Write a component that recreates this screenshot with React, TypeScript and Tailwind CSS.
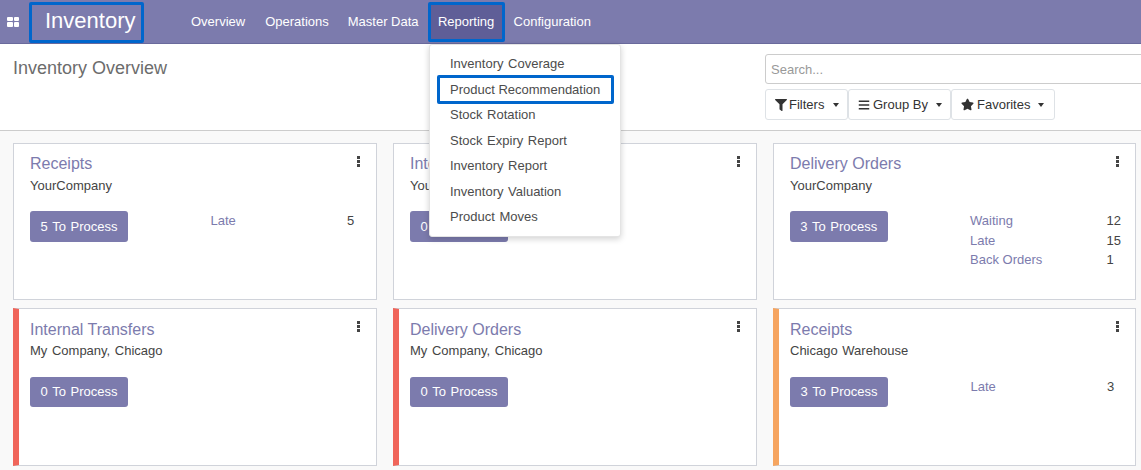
import { FaFilter, FaBars, FaStar } from "react-icons/fa";

type Stat = { label: string; value: number };
type Card = {
  title: string;
  company: string;
  button: string;
  accent?: string;
  stats: Stat[];
};

const cards: Card[] = [
  { title: "Receipts", company: "YourCompany", button: "5 To Process", stats: [{ label: "Late", value: 5 }] },
  { title: "Internal Transfers", company: "YourCompany", button: "0 To Process", stats: [] },
  {
    title: "Delivery Orders",
    company: "YourCompany",
    button: "3 To Process",
    stats: [
      { label: "Waiting", value: 12 },
      { label: "Late", value: 15 },
      { label: "Back Orders", value: 1 },
    ],
  },
  { title: "Internal Transfers", company: "My Company, Chicago", button: "0 To Process", accent: "border-l-[#f0655a]", stats: [] },
  { title: "Delivery Orders", company: "My Company, Chicago", button: "0 To Process", accent: "border-l-[#f0655a]", stats: [] },
  {
    title: "Receipts",
    company: "Chicago Warehouse",
    button: "3 To Process",
    accent: "border-l-[#f6a560]",
    stats: [{ label: "Late", value: 3 }],
  },
];

const reports = [
  "Inventory Coverage",
  "Product Recommendation",
  "Stock Rotation",
  "Stock Expiry Report",
  "Inventory Report",
  "Inventory Valuation",
  "Product Moves",
];

function Caret() {
  return <span className="ml-[8px] h-0 w-0 border-x-[3px] border-t-[4px] border-x-transparent border-t-[#333]" />;
}

function Kebab() {
  return (
    <span className="absolute right-[16px] top-[12px] flex flex-col gap-[1px]">
      <span className="h-[3px] w-[3px] bg-[#444]" />
      <span className="h-[3px] w-[3px] bg-[#444]" />
      <span className="h-[3px] w-[3px] bg-[#444]" />
    </span>
  );
}

function KanbanCard({ card }: { card: Card }) {
  const accented = Boolean(card.accent);
  return (
    <div
      className={`relative border border-[#d0d3da] bg-white pr-[14px] ${
        accented ? `h-[158px] border-l-[6px] pl-[11px] pt-[9px] ${card.accent}` : "h-[157px] pl-[16px] pt-[8px]"
      }`}
    >
      <Kebab />
      <div className="text-[16px] leading-[23px] text-[#7c7bad]">{card.title}</div>
      <div className={`text-[13px] leading-[18px] text-[#444] [word-spacing:1px] ${accented ? "mt-[1px]" : "mt-[2px]"}`}>
        {card.company}
      </div>
      <div className={`flex ${accented ? "mt-[17px]" : "mt-[16px]"}`}>
        <div
          className={`flex w-[98px] items-center justify-center rounded-[3px] bg-[#7c7bad] text-[13px] text-white [word-spacing:1px] ${
            accented ? "h-[30px]" : "h-[31px]"
          }`}
        >
          {card.button}
        </div>
        <div className="ml-[82.5px] flex-1 text-[13px] leading-[19.5px]">
          {card.stats.map((s) => (
            <div key={s.label} className="flex">
              <span className="w-[136.5px] text-[#7c7bad]">{s.label}</span>
              <span className="text-[#444]">{s.value}</span>
            </div>
          ))}
        </div>
      </div>
    </div>
  );
}

export default function App() {
  return (
    <div className="relative h-[470px] w-[1141px] overflow-hidden bg-[#f9f9f9] font-['Liberation_Sans',sans-serif] text-[13px] text-[#4c4c4c]">
      <nav className="flex h-[44px] items-center border-b border-[#6a6a9c] bg-[#7c7bad] text-white">
        <div className="ml-[7px] grid w-[12px] grid-cols-2 gap-[1px]">
          <span className="h-[4.5px] rounded-[1px] bg-white" />
          <span className="h-[4.5px] rounded-[1px] bg-white" />
          <span className="h-[4.5px] rounded-[1px] bg-white" />
          <span className="h-[4.5px] rounded-[1px] bg-white" />
        </div>
        <div className="ml-[10px] flex h-[41px] w-[115px] items-center self-end rounded-[2px] border-[3px] border-[#0066cc] pb-[4px] pl-[13px] text-[22px]">
          Inventory
        </div>
        <div className="ml-[47px] flex items-center">
          <span className="mr-[20px]">Overview</span>
          <span className="mr-[19px]">Operations</span>
          <span className="mr-[9px]">Master Data</span>
          <span className="mr-[9px] flex h-[40px] w-[77px] items-center justify-center rounded-[2px] border-[3px] border-[#0066cc] bg-[#5f5e97]">
            Reporting
          </span>
          <span>Configuration</span>
        </div>
      </nav>

      <header className="flex h-[87px] border-b border-[#ccc] bg-white">
        <h1 className="ml-[13px] mt-[13px] w-[752px] shrink-0 text-[18px] leading-[22px] text-[#6c6c6c]">Inventory Overview</h1>
        <div className="w-[400px] shrink-0 pt-[10px]">
          <div className="flex h-[30px] items-center rounded-[3px] border border-[#ccc] pl-[5px] pt-[2px] text-[#999]">Search...</div>
          <div className="mt-[5px] flex text-[#333]">
            <div className="flex h-[31px] w-[83px] items-center rounded-[3px] border border-[#dee2e6] pl-[9px]">
              <FaFilter className="mr-[2px] text-[12px]" />
              <span className="mr-[1px]">Filters</span>
              <Caret />
            </div>
            <div className="flex h-[31px] w-[103px] items-center rounded-[3px] border border-[#dee2e6] pl-[9px]">
              <FaBars className="mr-[3px] text-[12px]" />
              Group By
              <Caret />
            </div>
            <div className="flex h-[31px] w-[104px] items-center rounded-[3px] border border-[#dee2e6] pl-[9px]">
              <FaStar className="mr-[3px] text-[13px]" />
              Favorites
              <Caret />
            </div>
          </div>
        </div>
      </header>

      <main className="grid grid-cols-[364px_364px_363px] items-start gap-x-[16px] gap-y-[8px] pl-[13px] pt-[12px]">
        {cards.map((c, i) => (
          <KanbanCard key={i} card={c} />
        ))}
      </main>

      <div className="absolute left-[429px] top-[44px] h-[193px] w-[192px] rounded-[3px] border border-[#e4e4e4] bg-white py-[6px] text-[#4c4c4c] shadow-[0_2px_6px_rgba(0,0,0,0.18)] [word-spacing:1px]">
        {reports.map((r) =>
          r === "Product Recommendation" ? (
            <div key={r} className="-my-[2px] ml-[7px] flex h-[29.5px] w-[177px] items-center rounded-[2px] border-[3px] border-[#0066cc] pl-[10px] [word-spacing:0]">
              {r}
            </div>
          ) : (
            <div key={r} className="flex h-[25.5px] items-center pl-[20px]">
              {r}
            </div>
          ),
        )}
      </div>
    </div>
  );
}
